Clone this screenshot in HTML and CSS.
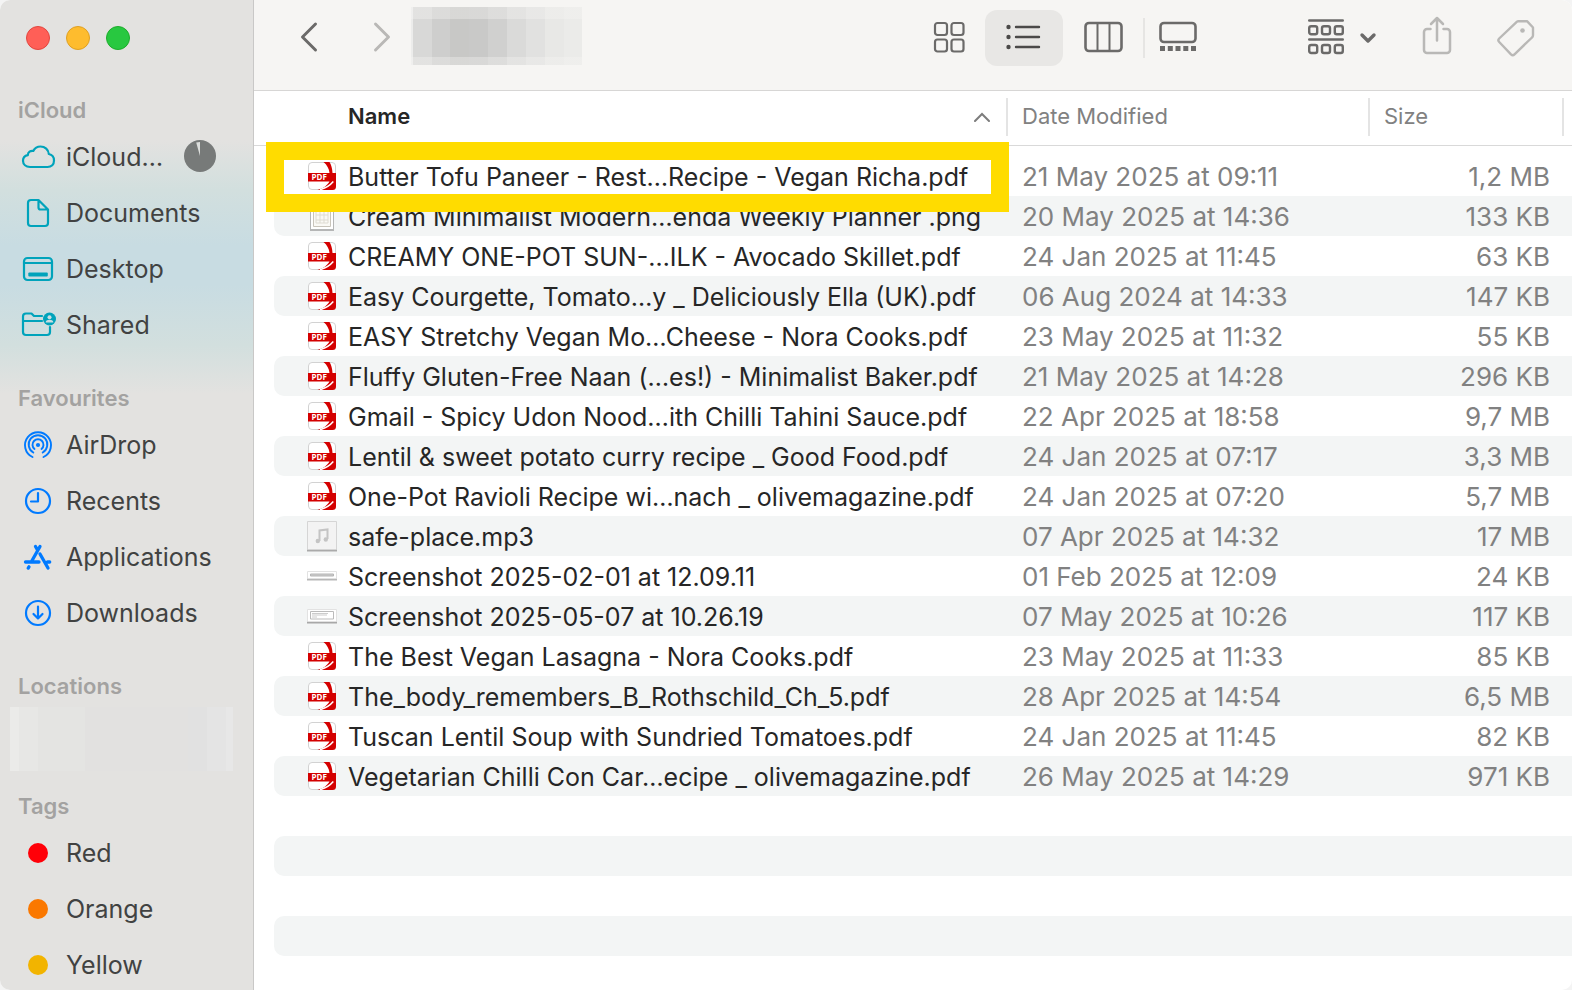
FILE: index.html
```html
<!DOCTYPE html>
<html lang="en-GB">
<head>
<meta charset="utf-8">
<meta name="viewport" content="width=device-width, initial-scale=1">
<title>Finder</title>
<link rel="stylesheet" href="styles.css">
</head>
<body>
<svg class="defs" aria-hidden="true">
  <symbol id="pdf" viewBox="0 0 28 28">
    <rect x=".5" y=".5" width="27" height="27" rx="3.500" fill="#fff" stroke="#d2d2d2"/>
    <path d="M15.500 0H21.500C23.300 3 24.300 6.500 24.500 11H21.500C21 6.500 19 3 15.500 0Z" fill="#d40000"/>
    <path d="M0 11h28v13.500a3.500 3.500 0 0 1-3.500 3.500H9.500C15.500 26.500 19 23.500 21.500 19.500H0Z" fill="#d40000"/>
    <path d="M25.300 19.500C22 23.500 18 26 12 27.700" fill="none" stroke="#fff" stroke-width="1.500"/>
    <text x="3.600" y="18" class="pdf-text">PDF</text>
  </symbol>
</svg>
<div class="window">
  <nav class="sidebar" aria-label="Sidebar">
    <div class="lights">
      <button class="light close" aria-label="Close"></button>
      <button class="light minimise" aria-label="Minimise"></button>
      <button class="light zoom" aria-label="Zoom"></button>
    </div>
    <section class="group">
      <h2>iCloud</h2>
      <a href="#icloud" class="teal"><svg viewBox="0 0 34 30"><path d="M8 25C4 25 1 22.500 1 18.800c0-3 2-5 4.800-5.600C6 10 8.500 8.500 11.300 9 12.800 6 15.500 4.500 18.500 4.500c4.500 0 8 3.200 8.300 7.500 3.200.6 5.200 3 5.200 6.500 0 3.800-2.500 6.500-6.500 6.500Z"/></svg><span>iCloud…</span><svg class="progress" viewBox="0 0 32 32" aria-label="Syncing"><circle cx="16" cy="16" r="16"/><path d="M16 16 12.200 2.500A14 14 0 0 1 16 2Z"/></svg></a>
      <a href="#documents" class="teal"><svg viewBox="0 0 34 30"><path d="M9 2h7.500L26 11.500V25a3 3 0 0 1-3 3H9a3 3 0 0 1-3-3V5a3 3 0 0 1 3-3ZM16.500 2v7.500a2 2 0 0 0 2 2H26"/></svg><span>Documents</span></a>
      <a href="#desktop" class="teal"><svg viewBox="0 0 34 30"><rect x="2" y="4" width="28" height="22" rx="3.500"/><path d="M2 9h28"/><rect class="solid" x="6.300" y="18.500" width="19.500" height="4" rx="1"/></svg><span>Desktop</span></a>
      <a href="#shared" class="teal"><svg class="wide" viewBox="0 0 36 30"><path d="M20 6H12L9.500 3.500H4a3 3 0 0 0-3 3V22a3 3 0 0 0 3 3h21a3 3 0 0 0 3-3v-5M1 11h19"/><circle class="solid" cx="27.500" cy="9" r="6.500"/><circle class="paper" cx="27.500" cy="7.300" r="2"/><path class="paper" d="M23.700 12.500a3.800 2.800 0 0 1 7.600 0Z"/></svg><span>Shared</span></a>
    </section>
    <section class="group">
      <h2>Favourites</h2>
      <a href="#airdrop" class="blue"><svg viewBox="0 0 34 30"><path d="M10.500 27a13 13 0 1 1 11 0M11.300 22.500a9.300 9.300 0 1 1 9.400 0M12.500 19a5.500 5.500 0 1 1 7 0" stroke-width="1.900"/><circle class="solid" cx="16" cy="15" r="2.100"/></svg><span>AirDrop</span></a>
      <a href="#recents" class="blue"><svg viewBox="0 0 34 30"><circle cx="16" cy="15" r="12"/><path d="M16 7v8.500H9"/></svg><span>Recents</span></a>
      <a href="#applications" class="blue"><svg viewBox="0 0 34 30"><path d="m18 4.500-8.500 15M13.500 4.500l2 3.500M3.500 20H17M25.500 20h2.200M18 12l8 14M7 24.800l-.8 1.300" stroke-width="3.300"/></svg><span>Applications</span></a>
      <a href="#downloads" class="blue"><svg viewBox="0 0 34 30"><circle cx="16" cy="15" r="12"/><path d="M16 8.500v12M11.500 16l4.500 4.500 4.500-4.500"/></svg><span>Downloads</span></a>
    </section>
    <section class="group">
      <h2>Locations</h2>
      <div class="masked-location"></div>
    </section>
    <section class="group tags">
      <h2>Tags</h2>
      <a href="#red"><i class="dot red"></i><span>Red</span></a>
      <a href="#orange"><i class="dot orange"></i><span>Orange</span></a>
      <a href="#yellow"><i class="dot yellow"></i><span>Yellow</span></a>
    </section>
  </nav>
  <main class="main">
    <header class="toolbar">
      <div class="history">
        <button aria-label="Back"><svg width="18" height="42" viewBox="0 0 18 42"><path d="M15.500 7 2.500 20l13 13" stroke-width="3"/></svg></button>
        <button aria-label="Forward" disabled><svg width="18" height="42" viewBox="0 0 18 42"><path d="m2.500 7 13 13-13 13" stroke-width="3"/></svg></button>
      </div>
      <div class="masked-title"></div>
      <div class="views">
        <button aria-label="Icon view"><svg width="32" height="42" viewBox="0 0 32 42" stroke-width="2.200"><rect x="1" y="6" width="12" height="12" rx="2.500"/><rect x="17.500" y="6" width="12" height="12" rx="2.500"/><rect x="1" y="22.500" width="12" height="12" rx="2.500"/><rect x="17.500" y="22.500" width="12" height="12" rx="2.500"/></svg></button>
        <button class="active" aria-label="List view" aria-pressed="true"><svg width="34" height="42" viewBox="0 0 34 42" stroke-width="2.400"><path d="M9 10h23M9 20h23M9 30h23"/><g class="solid"><circle cx="1.500" cy="10" r="2.200"/><circle cx="1.500" cy="20" r="2.200"/><circle cx="1.500" cy="30" r="2.200"/></g></svg></button>
        <button class="columns" aria-label="Column view"><svg width="40" height="42" viewBox="0 0 40 42" stroke-width="2.600"><rect x="1.500" y="6" width="36" height="28" rx="3.500"/><path d="M13.500 6v28M25.500 6v28" stroke-width="2"/></svg></button>
        <button class="gallery" aria-label="Gallery view"><svg width="38" height="42" viewBox="0 0 38 42" stroke-width="2.600"><rect x="1.500" y="6" width="35" height="19" rx="3.500"/><path class="solid" d="M1 29h5v5H1Zm7.800 0h5v5h-5Zm7.700 0h5v5h-5Zm7.800 0h5v5h-5Zm7.700 0h5v5h-5Z"/></svg></button>
      </div>
      <button class="arrange" aria-label="Group items"><svg width="68" height="42" viewBox="0 0 68 42" stroke-width="2.400"><path d="M1.200 3.500h33.600M1.200 22.500h33.600"/><rect x="1.200" y="9.200" width="8" height="8" rx="2"/><rect x="14" y="9.200" width="8" height="8" rx="2"/><rect x="26.800" y="9.200" width="8" height="8" rx="2"/><rect x="1.200" y="28" width="8" height="8" rx="2"/><rect x="14" y="28" width="8" height="8" rx="2"/><rect x="26.800" y="28" width="8" height="8" rx="2"/><path d="m54 18 6 6 6-6" stroke-width="3.400"/></svg></button>
      <button aria-label="Share" disabled><svg width="30" height="42" viewBox="0 0 30 42" stroke-width="2.500"><path d="M8.500 12H5a3 3 0 0 0-3 3v18a3 3 0 0 0 3 3h20a3 3 0 0 0 3-3V15a3 3 0 0 0-3-3h-3.500M15 23.500V1.500M9 7l6-6 6 6"/></svg></button>
      <button class="tag" aria-label="Tags" disabled><svg width="38" height="42" viewBox="0 0 38 42" stroke-width="2.400"><path d="m20 4.600-17.800 16.900a2.500 2.500 0 0 0 0 3.500L14 37.300a2.500 2.500 0 0 0 3.500 0L35 20.500a3 3 0 0 0 1-2.200V10.500L30 4.200h-8.500a2 2 0 0 0-1.500.4Z"/><circle class="solid" cx="25.500" cy="13.500" r="2.300"/></svg></button>
    </header>
    <table class="files">
      <colgroup><col><col class="col-date"><col class="col-size"></colgroup>
      <thead>
        <tr>
          <th scope="col" aria-sort="ascending"><div class="head head-name"><button>Name</button><svg width="16" height="10" viewBox="0 0 16 10"><path d="m1 9 7-7 7 7"/></svg></div></th>
          <th scope="col"><div class="head"><button>Date Modified</button></div></th>
          <th scope="col"><div class="head"><button>Size</button></div></th>
        </tr>
      </thead>
      <tbody>
        <tr class="marked"><td><div class="file"><svg><use href="#pdf"/></svg><span>Butter Tofu Paneer - Rest…Recipe - Vegan Richa.pdf</span></div></td><td>21 May 2025 at 09:11</td><td>1,2 MB</td></tr>
        <tr><td><div class="file"><svg viewBox="0 0 28 28"><path fill="#777" opacity=".5" d="M2 1h24v28H2z"/><path fill="#fff" d="M3 0h22v27H3z"/><path fill="#faf9f5" stroke="#c9c5bb" d="M5.500 2.500h17v22h-17z"/><path stroke="#dedbd2" d="M8 8h12M8 13h12M8 18h12M8 21h12M8 8v13M12 8v13M16 8v13M20 8v13" fill="none"/></svg><span>Cream Minimalist Modern…enda Weekly Planner .png</span></div></td><td>20 May 2025 at 14:36</td><td>133 KB</td></tr>
        <tr><td><div class="file"><svg><use href="#pdf"/></svg><span>CREAMY ONE-POT SUN-…ILK - Avocado Skillet.pdf</span></div></td><td>24 Jan 2025 at 11:45</td><td>63 KB</td></tr>
        <tr><td><div class="file"><svg><use href="#pdf"/></svg><span>Easy Courgette, Tomato…y _ Deliciously Ella (UK).pdf</span></div></td><td>06 Aug 2024 at 14:33</td><td>147 KB</td></tr>
        <tr><td><div class="file"><svg><use href="#pdf"/></svg><span>EASY Stretchy Vegan Mo…Cheese - Nora Cooks.pdf</span></div></td><td>23 May 2025 at 11:32</td><td>55 KB</td></tr>
        <tr><td><div class="file"><svg><use href="#pdf"/></svg><span>Fluffy Gluten-Free Naan (…es!) - Minimalist Baker.pdf</span></div></td><td>21 May 2025 at 14:28</td><td>296 KB</td></tr>
        <tr><td><div class="file"><svg><use href="#pdf"/></svg><span>Gmail - Spicy Udon Nood…ith Chilli Tahini Sauce.pdf</span></div></td><td>22 Apr 2025 at 18:58</td><td>9,7 MB</td></tr>
        <tr><td><div class="file"><svg><use href="#pdf"/></svg><span>Lentil &amp; sweet potato curry recipe _ Good Food.pdf</span></div></td><td>24 Jan 2025 at 07:17</td><td>3,3 MB</td></tr>
        <tr><td><div class="file"><svg><use href="#pdf"/></svg><span>One-Pot Ravioli Recipe wi…nach _ olivemagazine.pdf</span></div></td><td>24 Jan 2025 at 07:20</td><td>5,7 MB</td></tr>
        <tr><td><div class="file"><svg viewBox="0 0 28 28"><path fill="#aaa" d="M-1 1h30v28.500H-1z"/><path fill="#f3f3f3" stroke="#d5d5d5" d="M-.5-.5h29v28h-29z"/><path fill="none" stroke="#c4c4c4" stroke-width="2" d="M11.500 19V8.500l8-1V17"/><circle cx="9.800" cy="19" r="2.200" fill="#c4c4c4"/><circle cx="17.800" cy="17.500" r="2.200" fill="#c4c4c4"/></svg><span>safe-place.mp3</span></div></td><td>07 Apr 2025 at 14:32</td><td>17 MB</td></tr>
        <tr><td><div class="file"><svg viewBox="0 0 28 28"><path fill="#999" opacity=".7" d="M-1 10h30v8.500H-1z"/><path fill="#fff" stroke="#e2e2e2" d="M-.5 9.500h29v7h-29z"/><path fill="#ccc" stroke="#b5b5b5" d="M2.500 12h23v2h-23z"/></svg><span>Screenshot 2025-02-01 at 12.09.11</span></div></td><td>01 Feb 2025 at 12:09</td><td>24 KB</td></tr>
        <tr><td><div class="file"><svg viewBox="0 0 28 28"><path fill="#888" opacity=".7" d="M-1 8h30v13.500H-1z"/><path fill="#fff" stroke="#e2e2e2" d="M-.5 7.500h29v12h-29z"/><path fill="#fff" stroke="#bbb" d="M2.500 9.500h23v7.500h-23z"/><path stroke="#ccc" d="M4 11.500h16M4 13h15M4 15h5"/></svg><span>Screenshot 2025-05-07 at 10.26.19</span></div></td><td>07 May 2025 at 10:26</td><td>117 KB</td></tr>
        <tr><td><div class="file"><svg><use href="#pdf"/></svg><span>The Best Vegan Lasagna - Nora Cooks.pdf</span></div></td><td>23 May 2025 at 11:33</td><td>85 KB</td></tr>
        <tr><td><div class="file"><svg><use href="#pdf"/></svg><span>The_body_remembers_B_Rothschild_Ch_5.pdf</span></div></td><td>28 Apr 2025 at 14:54</td><td>6,5 MB</td></tr>
        <tr><td><div class="file"><svg><use href="#pdf"/></svg><span>Tuscan Lentil Soup with Sundried Tomatoes.pdf</span></div></td><td>24 Jan 2025 at 11:45</td><td>82 KB</td></tr>
        <tr><td><div class="file"><svg><use href="#pdf"/></svg><span>Vegetarian Chilli Con Car…ecipe _ olivemagazine.pdf</span></div></td><td>26 May 2025 at 14:29</td><td>971 KB</td></tr>
        <tr><td><div class="file"></div></td><td></td><td></td></tr>
        <tr><td><div class="file"></div></td><td></td><td></td></tr>
        <tr><td><div class="file"></div></td><td></td><td></td></tr>
        <tr><td><div class="file"></div></td><td></td><td></td></tr>
      </tbody>
    </table>
  </main>
</div>
</body>
</html>
```
FILE: styles.css
```css
* { box-sizing: border-box; }
body {
  margin: 0;
  background: #f4f4f4;
  font-family: Inter, "Liberation Sans", sans-serif;
  font-size: 25px;
}
button {
  margin: 0;
  padding: 0;
  border: 0;
  background: none;
  font: inherit;
  color: inherit;
}
.defs { display: none; }
.pdf-text { font: 700 8px "Open Sans", sans-serif; fill: #fff; }

.window {
  display: grid;
  grid-template-columns: 254px minmax(0, 1fr);
  height: 100vh;
  overflow: hidden;
  border-radius: 10px;
  background: #fff;
}

/* Sidebar */
.sidebar {
  overflow: hidden;
  border-right: 1px solid #c9c8c7;
  background: linear-gradient(#e3e2e0 140px, #d2dfde 190px, #c8dce2 245px, #c8dce2 285px, #d2dfde 345px, #e3e2e0 394px);
  color: #414242;
}
.lights { display: flex; gap: 16px; padding: 26px 26px 15px; }
.light { width: 24px; height: 24px; border-radius: 50%; }
.close { background: #ff5f57; border: 1px solid #e2463f; }
.minimise { background: #febc2e; border: 1px solid #dfa023; }
.zoom { background: #28c840; border: 1px solid #1dad2b; }
.group { margin-top: 26px; }
.group h2 {
  margin: 0;
  padding-left: 18px;
  font-size: 22px;
  font-weight: 600;
  line-height: 38px;
  color: #a3a2a1;
}
.group a {
  display: flex;
  align-items: center;
  gap: 10px;
  height: 56px;
  padding-left: 22px;
  color: inherit;
  text-decoration: none;
}
.group a > svg:first-child {
  width: 34px;
  height: 30px;
  overflow: visible;
  fill: none;
  stroke: currentColor;
  stroke-width: 2.2;
  stroke-linecap: round;
  stroke-linejoin: round;
}
.group a > svg.wide:first-child { width: 36px; margin-right: -2px; }
.group .teal svg { color: #00a3bb; }
.group .blue svg { color: #007aff; }
.group .solid { fill: currentColor; stroke: none; }
.group .paper { fill: #cbdde1; stroke: none; }
.group a .progress { width: 32px; height: 32px; margin: 0 37px 2px auto; }
.progress circle { fill: #777a79; }
.progress path { fill: #dcdedc; }
.masked-location {
  height: 64px;
  margin: 2px 20px 0 10px;
  background: linear-gradient(90deg, #ebebe9 9px, #e7e7e5 9px 28px, #e4e4e2 28px 75px, #e2e1e0 75px 178px, #e1e1e1 178px 197px, #e4e4e4 197px 216px, #e7e7e7 216px);
}
.tags { margin-top: 16px; }
.dot { width: 20px; height: 20px; margin: 0 8px 0 6px; border-radius: 50%; }
.red { background: #ff0008; }
.orange { background: #fa7800; }
.yellow { background: #f2b400; }

/* Toolbar */
.main { overflow: hidden; }
.toolbar {
  display: flex;
  align-items: center;
  height: 91px;
  padding: 0 37px 14px 46px;
  border-bottom: 1px solid #d7d6d5;
  background: #f6f5f3;
  color: #6b6a69;
}
.toolbar svg {
  display: block;
  overflow: visible;
  fill: none;
  stroke: currentColor;
  stroke-linecap: round;
  stroke-linejoin: round;
}
.toolbar .solid { fill: currentColor; stroke: none; }
.toolbar button:disabled { color: #b9b8b6; }
.toolbar > button { margin-left: 46px; }
.toolbar > .tag { margin-left: 45px; }
.toolbar > .arrange { margin-left: 95px; }
.history { display: flex; gap: 55px; }
.masked-title {
  align-self: flex-start;
  width: 171px;
  height: 58px;
  margin: 7px 0 0 20px;
  background:
    linear-gradient(rgb(246 245 243 / 35%) 12px, transparent 12px 50px, rgb(246 245 243 / 35%) 50px),
    linear-gradient(90deg, #ececeb 2px, #d8d8d7 2px 21px, #cececd 21px 39px, #c8c8c6 39px 58px, #c9c9c8 58px 77px, #d0d0cf 77px 96px, #dadad9 96px 115px, #e1e1e0 115px 134px, #e8e8e6 134px 153px, #ebebe9 153px);
}
.views { display: flex; margin-left: auto; }
.views button { display: grid; place-items: center; width: 70px; height: 56px; }
.views .active { width: 78px; border-radius: 12px; background: #e8e7e5; color: #4b4a49; }
.views .columns { width: 80px; padding-left: 2px; }
.views .gallery { position: relative; }
.views .gallery::before {
  content: "";
  position: absolute;
  left: 0;
  width: 2px;
  height: 40px;
  background: #e6e5e3;
}

/* File list */
.files {
  width: 100%;
  table-layout: fixed;
  border-collapse: separate;
  border-spacing: 0;
  color: #818181;
}
.col-date { width: 362px; }
.col-size { width: 202px; }
.files th {
  height: 55px;
  padding: 0 0 3px;
  border-bottom: 1px solid #d9d9d9;
  font-size: 22px;
  font-weight: 400;
  text-align: left;
}
.head {
  display: flex;
  align-items: center;
  justify-content: space-between;
  height: 38px;
  padding: 0 16px 0 14px;
  border-right: 2px solid #e4e4e4;
}
.head button { padding-bottom: 2px; }
.files th:last-child { padding-right: 8px; }
.head-name { padding-left: 94px; font-weight: 600; color: #262626; }
.head svg { fill: none; stroke: #7d7d7d; stroke-width: 2; stroke-linecap: round; }
.files tbody::before { content: ""; display: table-row; height: 10px; }
.files td {
  height: 40px;
  padding: 2px 0 0 14px;
  font-size: 26px;
  line-height: 38px;
  white-space: nowrap;
}
.files td:first-child { padding: 0 0 0 20px; font-size: 25px; }
.files td:last-child { padding-right: 22px; text-align: right; }
.file {
  display: flex;
  align-items: center;
  gap: 12px;
  height: 40px;
  padding-left: 34px;
  border-radius: 10px 0 0 10px;
  color: #262626;
}
.file span { padding-top: 2px; }
.file svg { flex: none; width: 28px; height: 28px; overflow: visible; }
.files tbody tr:nth-child(even) .file,
.files tbody tr:nth-child(even) td:not(:first-child) { background: #f3f5f5; }
.marked td:first-child { position: relative; }
.marked td:first-child::after {
  content: "";
  position: absolute;
  inset: -14px -1px -16px 12px;
  border: 18px solid #ffdc00;
}
```
